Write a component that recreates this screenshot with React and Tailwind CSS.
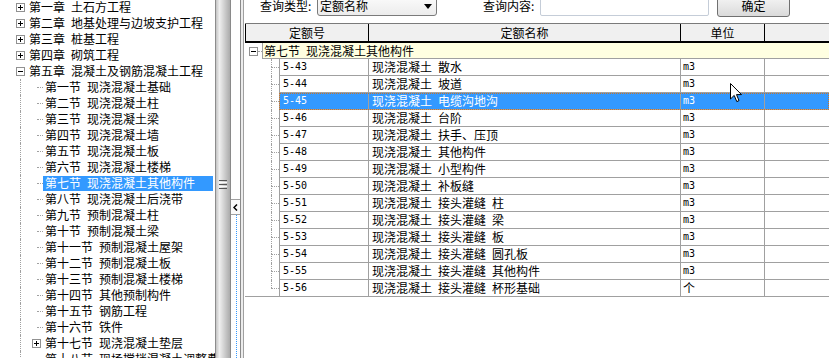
import { Fragment } from "react";

const chapters = [
  "第一章 土石方工程",
  "第二章 地基处理与边坡支护工程",
  "第三章 桩基工程",
  "第四章 砌筑工程",
];

const sections = [
  "第一节 现浇混凝土基础",
  "第二节 现浇混凝土柱",
  "第三节 现浇混凝土梁",
  "第四节 现浇混凝土墙",
  "第五节 现浇混凝土板",
  "第六节 现浇混凝土楼梯",
  "第七节 现浇混凝土其他构件",
  "第八节 现浇混凝土后浇带",
  "第九节 预制混凝土柱",
  "第十节 预制混凝土梁",
  "第十一节 预制混凝土屋架",
  "第十二节 预制混凝土板",
  "第十三节 预制混凝土楼梯",
  "第十四节 其他预制构件",
  "第十五节 钢筋工程",
  "第十六节 铁件",
];

const rows = [
  ["5-43", "现浇混凝土 散水", "m3"],
  ["5-44", "现浇混凝土 坡道", "m3"],
  ["5-45", "现浇混凝土 电缆沟地沟", "m3"],
  ["5-46", "现浇混凝土 台阶", "m3"],
  ["5-47", "现浇混凝土 扶手、压顶", "m3"],
  ["5-48", "现浇混凝土 其他构件", "m3"],
  ["5-49", "现浇混凝土 小型构件", "m3"],
  ["5-50", "现浇混凝土 补板缝", "m3"],
  ["5-51", "现浇混凝土 接头灌缝 柱", "m3"],
  ["5-52", "现浇混凝土 接头灌缝 梁", "m3"],
  ["5-53", "现浇混凝土 接头灌缝 板", "m3"],
  ["5-54", "现浇混凝土 接头灌缝 圆孔板", "m3"],
  ["5-55", "现浇混凝土 接头灌缝 其他构件", "m3"],
  ["5-56", "现浇混凝土 接头灌缝 杯形基础", "个"],
];

// SimSun-like half-width space: 6px
const Txt = ({ s }) =>
  s.split(" ").map((p, i) => (
    <Fragment key={i}>
      {i > 0 && <span className="inline-block w-[6px]" />}
      {p}
    </Fragment>
  ));

const Box = ({ open }) => (
  <svg width="9" height="9" viewBox="0 0 9 9" className="shrink-0">
    <rect x="0.5" y="0.5" width="8" height="8" fill="#fff" stroke="#919191" />
    <line x1="2" y1="4.5" x2="7" y2="4.5" stroke="#000" />
    {!open && <line x1="4.5" y1="2" x2="4.5" y2="7" stroke="#000" />}
  </svg>
);

const dot = "border-dotted border-[#a0a0a0]";

const Tree = () => (
  <div className="w-[216px] shrink-0 border-r border-[#8c8c8c] overflow-hidden bg-white">
    <div className="-mt-px">
      {chapters.map((c) => (
        <div key={c} className="flex items-center h-4 whitespace-nowrap">
          <span className="w-4 shrink-0" />
          <Box />
          <span className="ml-[4px]">
            <Txt s={c} />
          </span>
        </div>
      ))}
      <div className="flex items-center h-4 whitespace-nowrap">
        <span className="w-4 shrink-0" />
        <Box open />
        <span className="ml-[4px]">
          <Txt s="第五章 混凝土及钢筋混凝土工程" />
        </span>
      </div>
      {sections.map((s, i) => (
        <div key={s} className="flex items-center h-4 whitespace-nowrap">
          <span className="w-[20px] shrink-0" />
          <span className={`self-stretch w-[17px] shrink-0 border-l ${dot}`} />
          <span className={`w-[6px] shrink-0 border-t ${dot}`} />
          {i === 6 ? (
            <span className="flex-1 h-[15px] mr-[2px] bg-[#3399ff] text-white pl-[2px] flex items-center">
              <Txt s={s} />
            </span>
          ) : (
            <span className="ml-[2px]">
              <Txt s={s} />
            </span>
          )}
        </div>
      ))}
      <div className="flex items-center h-4 whitespace-nowrap">
        <span className="w-[20px] shrink-0" />
        <span className={`self-stretch w-[12px] shrink-0 border-l ${dot}`} />
        <Box />
        <span className="ml-[4px]">
          <Txt s="第十七节 现浇混凝土垫层" />
        </span>
      </div>
      <div className="flex items-center h-4 whitespace-nowrap">
        <span className="w-[20px] shrink-0" />
        <span className={`self-stretch w-[17px] shrink-0 border-l ${dot}`} />
        <span className={`w-[6px] shrink-0 border-t ${dot}`} />
        <span className="ml-[2px]">
          <Txt s="第十八节 现场搅拌混凝土调整费" />
        </span>
      </div>
    </div>
  </div>
);

const Splitter = () => (
  <div className="w-[15px] shrink-0 border-r border-[#8a8a8a] bg-linear-to-r from-[#c4c4c4] via-[#efefef] via-25% to-[#ababab] flex flex-col items-center">
    <div className="mt-[180px] flex flex-col gap-[1px]">
      <span className="w-[8px] h-px bg-[#555]" />
      <span className="w-[8px] h-px bg-[#f8f8f8]" />
      <span className="w-[8px] h-px bg-[#555]" />
      <span className="w-[8px] h-px bg-[#f8f8f8]" />
      <span className="w-[8px] h-px bg-[#555]" />
    </div>
  </div>
);

const Collapse = () => (
  <div className="w-[10px] shrink-0 bg-white border-r border-[#8a8a8a] flex flex-col">
    <div className="mt-[199px] h-[16px] border-t border-b border-[#a0a0a0] flex items-center justify-center bg-[#fafafa]">
      <svg width="5" height="7" viewBox="0 0 5 7">
        <path d="M4 0.5 L1 3.5 L4 6.5" fill="none" stroke="#000" strokeWidth="1.5" />
      </svg>
    </div>
    <div className="flex-1 ml-[5px] border-l border-dotted border-[#3399ff]" />
  </div>
);

const Query = () => (
  <div className="h-[22px] -mt-[5px] flex items-center pl-[16px] shrink-0 whitespace-nowrap">
    <span className="w-[57px]">查询类型:</span>
    <div className="w-[120px] h-[20px] border border-[#7a7a7a] rounded-[3px] bg-linear-to-b from-[#fbfbfb] to-[#ececec] flex items-center pl-[2px]">
      <span>定额名称</span>
      <svg width="8" height="5" viewBox="0 0 8 5" className="ml-auto mr-[4px]">
        <path d="M0 0 H8 L4 5 Z" fill="#000" />
      </svg>
    </div>
    <span className="ml-[46px] w-[57px]">查询内容:</span>
    <div className="w-[169px] h-[20px] border border-[#c5cdd8] rounded-[2px] bg-white" />
    <div className="ml-[8px] w-[73px] h-[22px] border border-[#707070] rounded-[3px] bg-linear-to-b from-[#f6f6f6] to-[#dadada] flex items-center justify-center">
      确定
    </div>
  </div>
);

const Grid = () => (
  <div className="mt-[6px] ml-px">
    {/* header */}
    <div className="flex h-[20px] bg-[#f0f0f0] border-t border-[#7a7a7a] border-b-2 border-b-black">
      <div className="w-[123px] shrink-0 border-l border-black flex items-center justify-center">定额号</div>
      <div className="w-[312px] shrink-0 border-l border-black flex items-center justify-center">定额名称</div>
      <div className="w-[84px] shrink-0 border-l border-black flex items-center justify-center">单位</div>
      <div className="flex-1 border-l border-black" />
    </div>
    {/* group row */}
    <div className="flex h-[16px] whitespace-nowrap">
      <div className="w-[17px] shrink-0 flex items-center pl-[4px]">
        <Box open />
        <span className={`w-[4px] border-t ${dot}`} />
      </div>
      <div className="flex-1 bg-[#ffffe1] border-l border-b border-[#a0a0a0] pl-[1px] flex items-center">
        <Txt s="第七节 现浇混凝土其他构件" />
      </div>
    </div>
    {/* data rows */}
    {rows.map(([code, name, unit], i) => {
      const last = i === rows.length - 1;
      const sel = i === 2;
      return (
        <div key={code} className={`flex h-[17px] whitespace-nowrap ${last ? "border-b border-[#a0a0a0]" : ""}`}>
          <div className="w-[34px] shrink-0 flex">
            <span className="w-[26px]" />
            <div className="w-[8px] flex flex-col">
              <span className={`flex-1 border-l ${dot}`} />
              <span className={`flex-1 border-t ${dot} ${last ? "" : "border-l"}`} />
            </div>
          </div>
          <div
            className={`flex-1 flex ${last ? "" : "border-b border-[#a0a0a0]"} ${
              sel ? "bg-[#3399ff] text-white outline-1 outline-dotted outline-[#c8742a] -outline-offset-1" : ""
            }`}
          >
            <div className="w-[89px] shrink-0 border-l border-[#a0a0a0] pl-[3px] flex items-center font-['DejaVu_Sans_Mono',monospace] text-[10px]">
              {code}
            </div>
            <div className="w-[312px] shrink-0 border-l border-[#a0a0a0] pl-[3px] flex items-center">
              <Txt s={name} />
            </div>
            <div
              className={`w-[84px] shrink-0 border-l border-[#a0a0a0] pl-[2px] flex items-center ${
                unit === "m3" ? "font-['DejaVu_Sans_Mono',monospace] text-[10px]" : ""
              }`}
            >
              {unit}
            </div>
            <div className="flex-1 border-l border-[#a0a0a0]" />
          </div>
        </div>
      );
    })}
  </div>
);

const Cursor = () => (
  <svg
    width="13"
    height="20"
    viewBox="0 0 13 20"
    className="absolute left-[730px] top-[83px] pointer-events-none"
  >
    <path
      d="M0.5 0.5 V16 L4.2 12.4 L6.8 18.6 L9 17.6 L6.5 11.6 H11.5 Z"
      fill="#fff"
      stroke="#000"
      strokeWidth="1"
      strokeLinejoin="miter"
    />
  </svg>
);

export default function App() {
  return (
    <div className="relative w-[829px] h-[358px] overflow-hidden flex bg-white text-black text-[12px] leading-4 font-['Noto_Sans_CJK_SC',sans-serif]">
      <Tree />
      <Splitter />
      <Collapse />
      <div className="w-[2px] shrink-0 bg-[#ececec]" />
      <div className="flex-1 min-w-0 border-l border-[#a0a0a0] bg-white flex flex-col">
        <Query />
        <Grid />
      </div>
      <Cursor />
    </div>
  );
}
